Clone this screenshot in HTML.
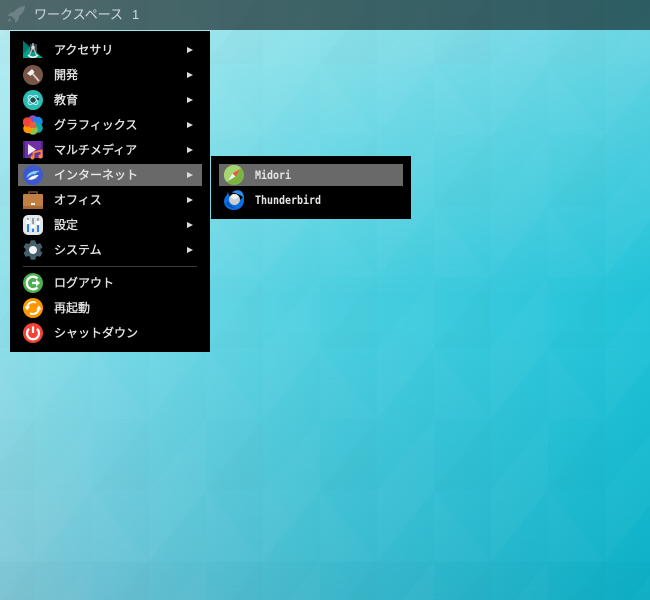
<!DOCTYPE html>
<html lang="ja">
<head>
<meta charset="utf-8">
<title>Desktop</title>
<style>
html,body{margin:0;padding:0;width:650px;height:600px;overflow:hidden}
body{position:relative;font-family:"Liberation Sans","Noto Sans CJK JP",sans-serif;background:#4ccfe0}
.bg{position:absolute;left:0;top:0;width:650px;height:600px}
.mid{background:linear-gradient(to right,#8fdfea 0,#4ccfe0 50%,#20c2d8 100%)}
.top{background:linear-gradient(to right,#b4ecf2 0,#8ae0e9 50%,#66d4e2 100%);-webkit-mask-image:linear-gradient(to bottom,#000 30px,transparent 300px);mask-image:linear-gradient(to bottom,#000 30px,transparent 300px)}
.bot{background:linear-gradient(to right,#80c6d6 0,#3fb9cd 50%,#0cafc6 100%);-webkit-mask-image:linear-gradient(to bottom,transparent 330px,#000 600px);mask-image:linear-gradient(to bottom,transparent 330px,#000 600px)}
.panel{position:absolute;left:0;top:0;width:650px;height:30px;background:rgba(0,0,0,.56)}
.ws{position:absolute;left:34px;top:6px;font-size:13px;line-height:18px;color:#d0dadb;white-space:pre}
.menu{position:absolute;background:#000}
.hl{position:absolute;background:#696969}
.t{position:absolute;left:54px;font-size:12px;line-height:18px;font-weight:400;-webkit-text-stroke:.3px #e8e8e8;color:#e8e8e8;white-space:nowrap}
.m{position:absolute;left:255px;font-family:"DejaVu Sans Mono","Liberation Mono",monospace;font-size:11.500px;line-height:16px;font-weight:700;color:#e6e6e6;white-space:nowrap;transform:scaleX(.867);transform-origin:0 50%}
svg.i{position:absolute;left:23px;width:20px;height:20px}
svg.a{position:absolute;left:187px;width:6px;height:6px}
</style>
</head>
<body>
<div class="bg mid"></div>
<div class="bg top"></div>
<div class="bg bot"></div>
<svg class="bg" width="650" height="600" viewBox="0 0 650 600">
<defs>
<pattern id="p" x="35" y="64" width="114" height="142" patternUnits="userSpaceOnUse">
<polygon points="0,71 57,0 0,0" fill="#fff" fill-opacity=".028"/>
<polygon points="57,0 114,71 57,71" fill="#fff" fill-opacity=".018"/>
<polygon points="0,142 57,71 57,142" fill="#fff" fill-opacity=".022"/>
<polygon points="57,142 114,71 114,142" fill="#000" fill-opacity=".012"/>
</pattern>
</defs>
<rect width="650" height="600" fill="url(#p)"/>
<rect x="0" y="562" width="650" height="38" fill="#000" fill-opacity=".012"/>
<rect x="0" y="30" width="650" height="34" fill="#fff" fill-opacity=".025"/>
</svg>

<div class="panel"></div>
<svg style="position:absolute;left:6px;top:5px" width="20" height="19" viewBox="0 0 20 19">
<path d="M19 1C14 1.500 10.500 3.500 8 7L4.500 7.500 1.500 11 5.500 11 9 14.500 9 18 12.500 15 13 11C16.500 8.500 18.500 5.500 19 1Z" fill="#6d8285"/>
<path d="M4 13 1 17 5.500 15.500Z" fill="#6d8285"/>
</svg>
<div class="ws">ワークスペース</div>
<div class="ws" style="left:132px">1</div>

<div class="menu" style="left:10px;top:31px;width:200px;height:321px"></div>
<div class="hl" style="left:18px;top:164px;width:184px;height:22px"></div>
<div style="position:absolute;left:23px;top:266px;width:174px;height:1px;background:#3c3c3c"></div>

<div class="t" style="top:41px">アクセサリ</div>
<div class="t" style="top:66px">開発</div>
<div class="t" style="top:91px">教育</div>
<div class="t" style="top:116px">グラフィックス</div>
<div class="t" style="top:141px">マルチメディア</div>
<div class="t" style="top:166px">インターネット</div>
<div class="t" style="top:191px">オフィス</div>
<div class="t" style="top:216px">設定</div>
<div class="t" style="top:241px">システム</div>
<div class="t" style="top:274px">ログアウト</div>
<div class="t" style="top:299px">再起動</div>
<div class="t" style="top:324px">シャットダウン</div>

<svg class="a" style="top:47px" viewBox="0 0 6 6"><path d="M0 0 6 3 0 6Z" fill="#ddd"/></svg>
<svg class="a" style="top:72px" viewBox="0 0 6 6"><path d="M0 0 6 3 0 6Z" fill="#ddd"/></svg>
<svg class="a" style="top:97px" viewBox="0 0 6 6"><path d="M0 0 6 3 0 6Z" fill="#ddd"/></svg>
<svg class="a" style="top:122px" viewBox="0 0 6 6"><path d="M0 0 6 3 0 6Z" fill="#ddd"/></svg>
<svg class="a" style="top:147px" viewBox="0 0 6 6"><path d="M0 0 6 3 0 6Z" fill="#ddd"/></svg>
<svg class="a" style="top:172px" viewBox="0 0 6 6"><path d="M0 0 6 3 0 6Z" fill="#ddd"/></svg>
<svg class="a" style="top:197px" viewBox="0 0 6 6"><path d="M0 0 6 3 0 6Z" fill="#ddd"/></svg>
<svg class="a" style="top:222px" viewBox="0 0 6 6"><path d="M0 0 6 3 0 6Z" fill="#ddd"/></svg>
<svg class="a" style="top:247px" viewBox="0 0 6 6"><path d="M0 0 6 3 0 6Z" fill="#ddd"/></svg>

<!-- accessories -->
<svg class="i" style="top:40px" viewBox="0 0 20 20">
<path d="M0 1 20 18 0 18Z" fill="#00a08e"/>
<path d="M0 1 7 7 0 14Z" fill="#00796b"/>
<path d="M7 4h7v8H7z" fill="#33454d"/>
<path d="M10 3V7M10 7 6 16M10 7 14 16" stroke="#bbb" stroke-width="1.400" fill="none"/>
<path d="M5 15C8 18 12 18 15 15" stroke="#eee" stroke-width="1.600" fill="none"/>
<circle cx="10" cy="7.500" r="1.800" fill="#ddd"/>
</svg>
<!-- development -->
<svg class="i" style="top:65px" viewBox="0 0 20 20">
<circle cx="10" cy="10" r="10" fill="#795548"/>
<path d="M9 8 15.500 15.500" stroke="#d9cdc7" stroke-width="1.800" stroke-linecap="round"/>
<path d="M4 8.500 9 4 11.500 7 7.500 11Z" fill="#f2f2f2"/>
</svg>
<!-- education -->
<svg class="i" style="top:90px" viewBox="0 0 20 20">
<circle cx="10" cy="10" r="10" fill="#2bbcb4"/>
<ellipse cx="10" cy="10" rx="6" ry="3" transform="rotate(40 10 10)" fill="none" stroke="#bdeeea" stroke-width="1"/>
<ellipse cx="10" cy="10" rx="6" ry="3" transform="rotate(-40 10 10)" fill="none" stroke="#bdeeea" stroke-width="1"/>
<circle cx="10" cy="10" r="2.500" fill="#2a4a50"/>
<circle cx="15" cy="9" r="1.200" fill="#2a4a50"/>
</svg>
<!-- graphics -->
<svg class="i" style="top:115px" viewBox="0 0 20 20">
<circle cx="10" cy="5" r="4.800" fill="#8e4ec6"/>
<circle cx="15" cy="6.500" r="4.800" fill="#1e88e5"/>
<circle cx="15" cy="13" r="4.800" fill="#13a89e"/>
<circle cx="10" cy="15" r="4.800" fill="#8bc34a"/>
<circle cx="5" cy="13.500" r="4.800" fill="#ff9800"/>
<circle cx="4.500" cy="7" r="4.800" fill="#f4433c"/>
<path d="M7 7h6v6H7z" fill="#e8603c"/>
</svg>
<!-- multimedia -->
<svg class="i" style="top:140px" viewBox="0 0 20 20">
<rect x="0" y="1" width="20" height="17" fill="#7030a8"/>
<path d="M0 1h2v17H0zM18 1h2v10h-2z" fill="#4e2080"/>
<path d="M5 4 13 9.500 5 15Z" fill="#f1eaf7"/>
<path d="M10.500 17V12.500L18.500 10.500V16" stroke="#ff8a1e" stroke-width="1.800" fill="none"/>
<circle cx="9.500" cy="17.500" r="2" fill="#ff8a1e"/>
<circle cx="17.500" cy="16.500" r="2" fill="#ff8a1e"/>
</svg>
<!-- internet -->
<svg class="i" style="top:165px" viewBox="0 0 20 20">
<circle cx="10" cy="10" r="10" fill="#3f58d0"/>
<path d="M3.500 13C4 8.500 9 5 17 6 14 7 13 8 12.500 9 9 9 6.500 10.500 3.500 13Z" fill="#7fd8f5"/>
<path d="M5 14.500C8 11 11.500 10 15.500 10 14 13 10 15.500 5 14.500Z" fill="#fff"/>
</svg>
<!-- office -->
<svg class="i" style="top:190px" viewBox="0 0 20 20">
<path d="M6 5V2h8V5" fill="none" stroke="#7d5330" stroke-width="1.600"/>
<rect x="0" y="4" width="20" height="15" rx="1" fill="#c27f44"/>
<rect x="0" y="16" width="20" height="3" fill="#a86a35"/>
<rect x="8" y="13" width="4" height="2" fill="#f5f0ea"/>
</svg>
<!-- settings -->
<svg class="i" style="top:215px" viewBox="0 0 20 20">
<rect x="0" y="0" width="20" height="20" rx="5" fill="#e4e8eb"/>
<path d="M5 3V17M10 3V17M15 3V17" stroke="#8f99a3" stroke-width="1.800"/>
<path d="M5 9V17M10 13V17M15 10V17" stroke="#2f80ed" stroke-width="2"/>
<circle cx="5" cy="7" r="2.200" fill="#fff"/>
<circle cx="10" cy="11.500" r="2.200" fill="#fff"/>
<circle cx="15" cy="8" r="2.200" fill="#fff"/>
</svg>
<!-- system -->
<svg class="i" style="top:240px" viewBox="0 0 20 20">
<g fill="#46606c">
<circle cx="10" cy="10" r="7.500"/>
<rect x="7.300" y="0.300" width="5.400" height="19.400" rx="1.500"/>
<rect x="7.300" y="0.300" width="5.400" height="19.400" rx="1.500" transform="rotate(60 10 10)"/>
<rect x="7.300" y="0.300" width="5.400" height="19.400" rx="1.500" transform="rotate(120 10 10)"/>
</g>
<circle cx="10" cy="10" r="4" fill="#f5f7f8"/>
</svg>
<!-- logout -->
<svg class="i" style="top:273px" viewBox="0 0 20 20">
<circle cx="10" cy="10" r="10" fill="#4caf50"/>
<path d="M14.500 5.500A6.300 6.300 0 1 0 14.500 14.500" fill="none" stroke="#fff" stroke-width="2.300"/>
<path d="M9 10H14.500" stroke="#fff" stroke-width="2.300"/>
<path d="M13 6.500 17 10 13 13.500Z" fill="#fff"/>
</svg>
<!-- reboot -->
<svg class="i" style="top:298px" viewBox="0 0 20 20">
<circle cx="10" cy="10" r="10" fill="#ff9800"/>
<path d="M4.200 9A5.900 5.900 0 0 1 13 4.800" fill="none" stroke="#fff" stroke-width="2"/>
<path d="M1.500 8.500 7 8.500 4.200 12.500Z" fill="#fff"/>
<path d="M15.800 11A5.900 5.900 0 0 1 7 15.200" fill="none" stroke="#fff" stroke-width="2"/>
<path d="M18.500 11.500 13 11.500 15.800 7.500Z" fill="#fff"/>
</svg>
<!-- shutdown -->
<svg class="i" style="top:323px" viewBox="0 0 20 20">
<circle cx="10" cy="10" r="10" fill="#f44336"/>
<path d="M6 5.800A6 6 0 1 0 14 5.800" fill="none" stroke="#fff" stroke-width="2.200"/>
<path d="M10 3.500V10" stroke="#fff" stroke-width="2.200"/>
</svg>

<div class="menu" style="left:211px;top:156px;width:200px;height:63px"></div>
<div class="hl" style="left:219px;top:164px;width:184px;height:22px"></div>
<!-- midori -->
<svg class="i" style="left:224px;top:165px" viewBox="0 0 20 20">
<circle cx="10" cy="10" r="10" fill="#7cb342"/>
<path d="M10 0A10 10 0 0 0 2.900 17.100L17.100 2.900A10 10 0 0 0 10 0Z" fill="#a5d56f"/>
<path d="M16 4 11.500 11.500 8.500 8.500Z" fill="#f4513c"/>
<path d="M4 16 8.500 8.500 11.500 11.500Z" fill="#f5f5f5"/>
</svg>
<div class="m" style="top:167px">Midori</div>
<!-- thunderbird -->
<svg class="i" style="left:224px;top:190px" viewBox="0 0 20 20">
<path d="M3.500 1C4 3 3.500 4 2 6 0.500 8 0 9.500 0 11.500 0 16.500 4.500 20 10 20 15.500 20 20 16 20 10.500L20 6 16 10 8 9 5.500 6Z" fill="#0a6fe0"/>
<path d="M8 2.500C10 0 15 -0.500 17.500 1.500 19.500 3.500 20 6 20 8 17 5 12 3 8 2.500Z" fill="#2b8ff0"/>
<circle cx="10.500" cy="9.500" r="5.500" fill="#c9ced3"/>
<path d="M6 7 10.500 9.500 15 7 12.500 4.300H8.500Z" fill="#f0f2f4"/>
<path d="M2 13C4 17 8 19 13 18.500 9 17 6 15.500 4.500 11.500Z" fill="#0751bd"/>
</svg>
<div class="m" style="top:192px">Thunderbird</div>
</body>
</html>
